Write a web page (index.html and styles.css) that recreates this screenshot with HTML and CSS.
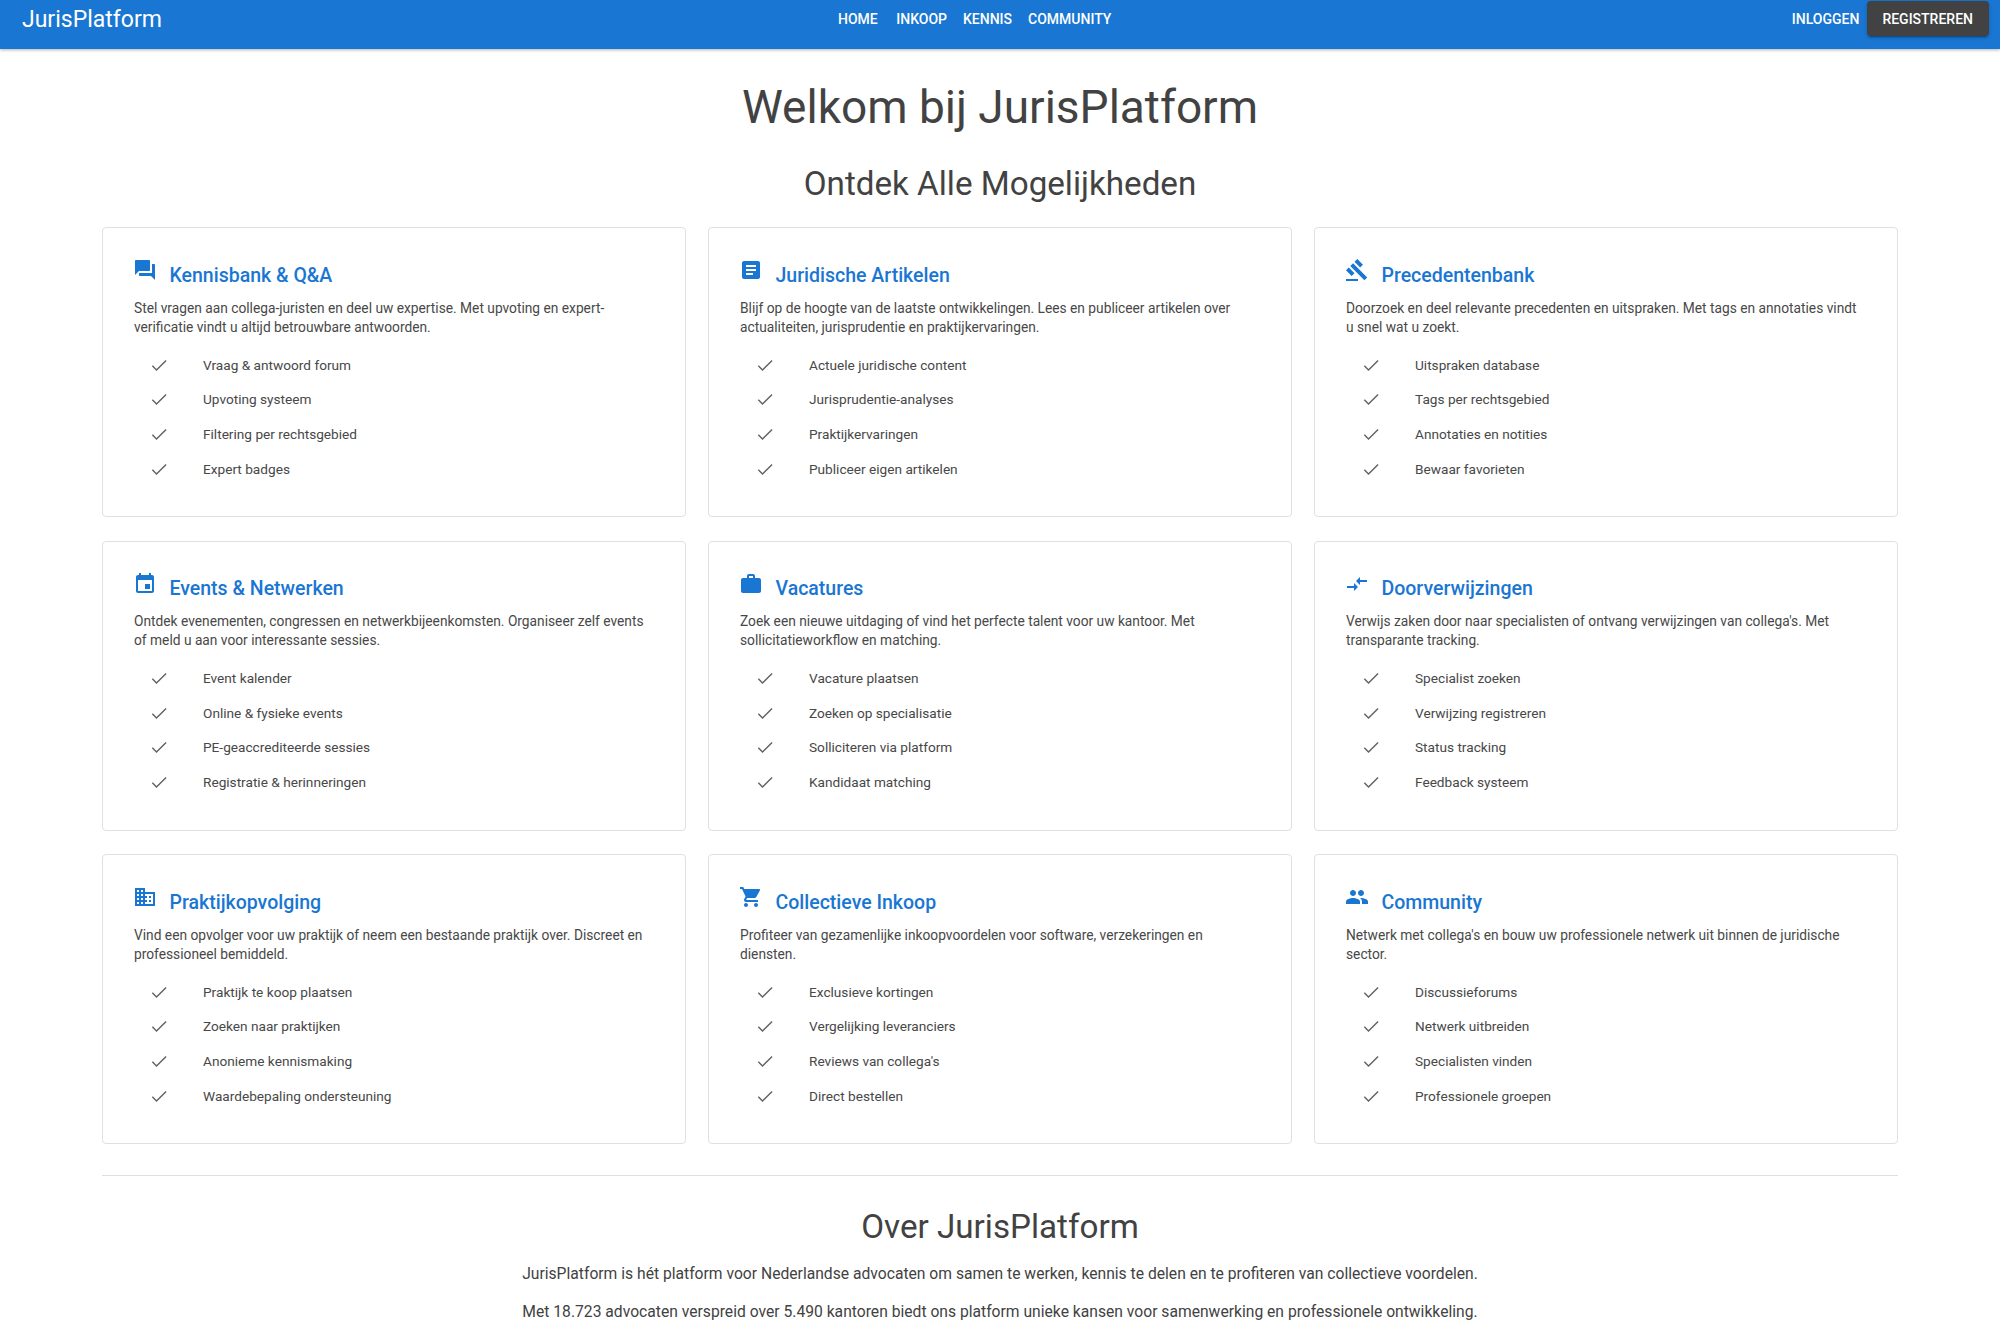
FILE: index.html
```html
<!DOCTYPE html>
<html lang="nl">
<head>
<meta charset="utf-8">
<title>JurisPlatform</title>
<link rel="stylesheet" href="styles.css">
</head>
<body>
<svg class="sprite" aria-hidden="true">
<symbol id="i-forum" viewBox="0 0 24 24"><path d="M21 6h-2v9H6v2c0 .55.45 1 1 1h11l4 4V7c0-.55-.45-1-1-1zm-4 6V3c0-.55-.45-1-1-1H3c-.55 0-1 .45-1 1v14l4-4h10c.55 0 1-.45 1-1z"/></symbol>
<symbol id="i-article" viewBox="0 0 24 24"><path d="M19 3H5c-1.1 0-2 .9-2 2v14c0 1.1.9 2 2 2h14c1.1 0 2-.9 2-2V5c0-1.1-.9-2-2-2zm-5 14H7v-2h7v2zm3-4H7v-2h10v2zm0-4H7V7h10v2z"/></symbol>
<symbol id="i-gavel" viewBox="0 0 24 24"><path d="M1 21h12v2H1v-2zM5.245 8.07l2.83-2.827 14.14 14.142-2.828 2.828L5.245 8.07zM12.317 1l5.657 5.656-2.83 2.83-5.654-5.66L12.317 1zM3.825 9.485l5.657 5.657-2.828 2.828-5.657-5.657 2.828-2.828z"/></symbol>
<symbol id="i-event" viewBox="0 0 24 24"><path d="M17 12h-5v5h5v-5zM16 1v2H8V1H6v2H5c-1.11 0-1.99.9-1.99 2L3 19c0 1.1.89 2 2 2h14c1.1 0 2-.9 2-2V5c0-1.1-.9-2-2-2h-1V1h-2zm3 18H5V8h14v11z"/></symbol>
<symbol id="i-work" viewBox="0 0 24 24"><path d="M20 6h-4V4c0-1.11-.89-2-2-2h-4c-1.11 0-2 .89-2 2v2H4c-1.11 0-1.99.89-1.99 2L2 19c0 1.11.89 2 2 2h16c1.11 0 2-.89 2-2V8c0-1.11-.89-2-2-2zm-6 0h-4V4h4v2z"/></symbol>
<symbol id="i-compare" viewBox="0 0 24 24"><path d="M9.01 14H2v2h7.01v3L13 15l-3.99-4v3zm5.98-1v-3H22V8h-7.01V5L11 9l3.99 4z"/></symbol>
<symbol id="i-business" viewBox="0 0 24 24"><path d="M12 7V3H2v18h20V7H12zM6 19H4v-2h2v2zm0-4H4v-2h2v2zm0-4H4V9h2v2zm0-4H4V5h2v2zm4 12H8v-2h2v2zm0-4H8v-2h2v2zm0-4H8V9h2v2zm0-4H8V5h2v2zm10 12h-8v-2h2v-2h-2v-2h2v-2h-2V9h8v10zm-2-8h-2v2h2v-2zm0 4h-2v2h2v-2z"/></symbol>
<symbol id="i-cart" viewBox="0 0 24 24"><path d="M7 18c-1.1 0-1.99.9-1.99 2S5.9 22 7 22s2-.9 2-2-.9-2-2-2zM1 2v2h2l3.6 7.59-1.35 2.45c-.16.28-.25.61-.25.96 0 1.1.9 2 2 2h12v-2H7.42c-.14 0-.25-.11-.25-.25l.03-.12.9-1.63h7.45c.75 0 1.41-.41 1.75-1.03l3.58-6.49c.08-.14.12-.31.12-.48 0-.55-.45-1-1-1H5.21l-.94-2H1zm16 16c-1.1 0-1.99.9-1.99 2s.89 2 1.99 2 2-.9 2-2-.9-2-2-2z"/></symbol>
<symbol id="i-people" viewBox="0 0 24 24"><path d="M16 11c1.66 0 2.99-1.34 2.99-3S17.66 5 16 5c-1.66 0-3 1.34-3 3s1.34 3 3 3zm-8 0c1.66 0 2.99-1.34 2.99-3S9.66 5 8 5C6.34 5 5 6.34 5 8s1.34 3 3 3zm0 2c-2.33 0-7 1.17-7 3.5V19h14v-2.5c0-2.33-4.67-3.5-7-3.5zm8 0c-.29 0-.62.02-.97.05 1.16.84 1.97 1.97 1.97 3.45V19h6v-2.5c0-2.33-4.67-3.5-7-3.5z"/></symbol>
<symbol id="i-check" viewBox="0 0 24 24"><path d="M4 13l5 5L20.5 6.5"/></symbol>
</svg>

<header class="appbar">
  <a class="brand">JurisPlatform</a>
  <nav class="nav">
    <a class="nav-link nav-link-first">Home</a>
    <a class="nav-link">Inkoop</a>
    <a class="nav-link">Kennis</a>
    <a class="nav-link">Community</a>
  </nav>
  <div class="auth">
    <a class="nav-link">Inloggen</a>
    <a class="btn-dark">Registreren</a>
  </div>
</header>

<main class="page">
  <h1 class="hero-title">Welkom bij JurisPlatform</h1>
  <h2 class="section-title">Ontdek Alle Mogelijkheden</h2>

  <section class="grid">
    <article class="card">
      <h3 class="card-head"><svg class="card-icon"><use href="#i-forum"/></svg><span class="card-title">Kennisbank &amp; Q&amp;A</span></h3>
      <p class="card-text">Stel vragen aan collega-juristen en deel uw expertise. Met upvoting en expert-verificatie vindt u altijd betrouwbare antwoorden.</p>
      <ul class="list">
        <li class="item"><svg class="check"><use href="#i-check"/></svg>Vraag &amp; antwoord forum</li>
        <li class="item"><svg class="check"><use href="#i-check"/></svg>Upvoting systeem</li>
        <li class="item"><svg class="check"><use href="#i-check"/></svg>Filtering per rechtsgebied</li>
        <li class="item"><svg class="check"><use href="#i-check"/></svg>Expert badges</li>
      </ul>
    </article>
    <article class="card">
      <h3 class="card-head"><svg class="card-icon"><use href="#i-article"/></svg><span class="card-title">Juridische Artikelen</span></h3>
      <p class="card-text">Blijf op de hoogte van de laatste ontwikkelingen. Lees en publiceer artikelen over actualiteiten, jurisprudentie en praktijkervaringen.</p>
      <ul class="list">
        <li class="item"><svg class="check"><use href="#i-check"/></svg>Actuele juridische content</li>
        <li class="item"><svg class="check"><use href="#i-check"/></svg>Jurisprudentie-analyses</li>
        <li class="item"><svg class="check"><use href="#i-check"/></svg>Praktijkervaringen</li>
        <li class="item"><svg class="check"><use href="#i-check"/></svg>Publiceer eigen artikelen</li>
      </ul>
    </article>
    <article class="card">
      <h3 class="card-head"><svg class="card-icon"><use href="#i-gavel"/></svg><span class="card-title">Precedentenbank</span></h3>
      <p class="card-text">Doorzoek en deel relevante precedenten en uitspraken. Met tags en annotaties vindt u snel wat u zoekt.</p>
      <ul class="list">
        <li class="item"><svg class="check"><use href="#i-check"/></svg>Uitspraken database</li>
        <li class="item"><svg class="check"><use href="#i-check"/></svg>Tags per rechtsgebied</li>
        <li class="item"><svg class="check"><use href="#i-check"/></svg>Annotaties en notities</li>
        <li class="item"><svg class="check"><use href="#i-check"/></svg>Bewaar favorieten</li>
      </ul>
    </article>
    <article class="card">
      <h3 class="card-head"><svg class="card-icon"><use href="#i-event"/></svg><span class="card-title">Events &amp; Netwerken</span></h3>
      <p class="card-text">Ontdek evenementen, congressen en netwerkbijeenkomsten. Organiseer zelf events of meld u aan voor interessante sessies.</p>
      <ul class="list">
        <li class="item"><svg class="check"><use href="#i-check"/></svg>Event kalender</li>
        <li class="item"><svg class="check"><use href="#i-check"/></svg>Online &amp; fysieke events</li>
        <li class="item"><svg class="check"><use href="#i-check"/></svg>PE-geaccrediteerde sessies</li>
        <li class="item"><svg class="check"><use href="#i-check"/></svg>Registratie &amp; herinneringen</li>
      </ul>
    </article>
    <article class="card">
      <h3 class="card-head"><svg class="card-icon"><use href="#i-work"/></svg><span class="card-title">Vacatures</span></h3>
      <p class="card-text">Zoek een nieuwe uitdaging of vind het perfecte talent voor uw kantoor. Met sollicitatieworkflow en matching.</p>
      <ul class="list">
        <li class="item"><svg class="check"><use href="#i-check"/></svg>Vacature plaatsen</li>
        <li class="item"><svg class="check"><use href="#i-check"/></svg>Zoeken op specialisatie</li>
        <li class="item"><svg class="check"><use href="#i-check"/></svg>Solliciteren via platform</li>
        <li class="item"><svg class="check"><use href="#i-check"/></svg>Kandidaat matching</li>
      </ul>
    </article>
    <article class="card">
      <h3 class="card-head"><svg class="card-icon"><use href="#i-compare"/></svg><span class="card-title">Doorverwijzingen</span></h3>
      <p class="card-text">Verwijs zaken door naar specialisten of ontvang verwijzingen van collega's. Met transparante tracking.</p>
      <ul class="list">
        <li class="item"><svg class="check"><use href="#i-check"/></svg>Specialist zoeken</li>
        <li class="item"><svg class="check"><use href="#i-check"/></svg>Verwijzing registreren</li>
        <li class="item"><svg class="check"><use href="#i-check"/></svg>Status tracking</li>
        <li class="item"><svg class="check"><use href="#i-check"/></svg>Feedback systeem</li>
      </ul>
    </article>
    <article class="card">
      <h3 class="card-head"><svg class="card-icon"><use href="#i-business"/></svg><span class="card-title">Praktijkopvolging</span></h3>
      <p class="card-text">Vind een opvolger voor uw praktijk of neem een bestaande praktijk over. Discreet en professioneel bemiddeld.</p>
      <ul class="list">
        <li class="item"><svg class="check"><use href="#i-check"/></svg>Praktijk te koop plaatsen</li>
        <li class="item"><svg class="check"><use href="#i-check"/></svg>Zoeken naar praktijken</li>
        <li class="item"><svg class="check"><use href="#i-check"/></svg>Anonieme kennismaking</li>
        <li class="item"><svg class="check"><use href="#i-check"/></svg>Waardebepaling ondersteuning</li>
      </ul>
    </article>
    <article class="card">
      <h3 class="card-head"><svg class="card-icon"><use href="#i-cart"/></svg><span class="card-title">Collectieve Inkoop</span></h3>
      <p class="card-text">Profiteer van gezamenlijke inkoopvoordelen voor software, verzekeringen en diensten.</p>
      <ul class="list">
        <li class="item"><svg class="check"><use href="#i-check"/></svg>Exclusieve kortingen</li>
        <li class="item"><svg class="check"><use href="#i-check"/></svg>Vergelijking leveranciers</li>
        <li class="item"><svg class="check"><use href="#i-check"/></svg>Reviews van collega's</li>
        <li class="item"><svg class="check"><use href="#i-check"/></svg>Direct bestellen</li>
      </ul>
    </article>
    <article class="card">
      <h3 class="card-head"><svg class="card-icon"><use href="#i-people"/></svg><span class="card-title">Community</span></h3>
      <p class="card-text">Netwerk met collega's en bouw uw professionele netwerk uit binnen de juridische sector.</p>
      <ul class="list">
        <li class="item"><svg class="check"><use href="#i-check"/></svg>Discussieforums</li>
        <li class="item"><svg class="check"><use href="#i-check"/></svg>Netwerk uitbreiden</li>
        <li class="item"><svg class="check"><use href="#i-check"/></svg>Specialisten vinden</li>
        <li class="item"><svg class="check"><use href="#i-check"/></svg>Professionele groepen</li>
      </ul>
    </article>
  </section>

  <hr class="divider">

  <section class="about">
    <h2 class="about-title">Over JurisPlatform</h2>
    <p class="about-text">JurisPlatform is hét platform voor Nederlandse advocaten om samen te werken, kennis te delen en te profiteren van collectieve voordelen.</p>
    <p class="about-text">Met 18.723 advocaten verspreid over 5.490 kantoren biedt ons platform unieke kansen voor samenwerking en professionele ontwikkeling.</p>
  </section>
</main>
</body>
</html>
```
FILE: styles.css
```css
* { box-sizing: border-box; }
html, body { margin: 0; padding: 0; }
body {
  font-family: Roboto, "Liberation Sans", sans-serif;
  color: #424242;
  background: #fff;
}
.sprite { display: none; }

.appbar {
  position: relative;
  height: 49px;
  background: #1976d2;
  color: #fff;
  padding: 0 11px 0 22px;
  display: flex;
  align-items: flex-start;
  justify-content: space-between;
  box-shadow: 0 1px 3px rgba(0,0,0,.3);
}
.brand { font-size: 23px; line-height: 39px; font-weight: 400; }
.nav {
  position: absolute;
  left: 830px;
  top: 1px;
  display: flex;
  gap: 0;
}
.nav-link {
  font-size: 14px;
  font-weight: 500;
  line-height: 36px;
  text-transform: uppercase;
  padding: 0 8px;
  display: block;
}
.nav-link-first { margin-right: 2.5px; }
.auth { display: flex; align-items: flex-start; padding-top: 1px; }
.btn-dark {
  height: 35px;
  font-size: 14px;
  font-weight: 500;
  line-height: 36px;
  text-transform: uppercase;
  padding: 0 16px 0 15px;
  background: #424242;
  border-radius: 4px;
  box-shadow: 0 3px 1px -2px rgba(0,0,0,.2), 0 2px 2px rgba(0,0,0,.14), 0 1px 5px rgba(0,0,0,.12);
}

.page { padding: 0 102px; }
.hero-title {
  margin: 0;
  padding-top: 30px;
  font-size: 46px;
  line-height: 56px;
  font-weight: 400;
  text-align: center;
}
.section-title {
  margin: 28px 0 0;
  font-size: 33.2px;
  line-height: 42px;
  font-weight: 400;
  text-align: center;
}
.grid {
  margin-top: 22px;
  display: grid;
  grid-template-columns: repeat(3, 584px);
  column-gap: 22px;
  row-gap: 23.5px;
}
.card {
  height: 290px;
  border: 1px solid #e0e0e0;
  border-radius: 4px;
  padding: 30px 31px 0;
}
.card-head {
  margin: 0;
  display: flex;
  align-items: flex-start;
  color: #1976d2;
  font-size: 19.5px;
  line-height: 24px;
  font-weight: 500;
}
.card-icon { width: 24px; height: 24px; fill: #1976d2; margin: 0 12.5px 0 -1px; flex: none; }
.card-title { padding-top: 5.5px; display: block; }
.card-text {
  margin: 11px 0 0;
  font-size: 13.75px;
  line-height: 19px;
  color: #484848;
}
.list { list-style: none; margin: 11px 0 0; padding: 0; }
.item {
  height: 34.6px;
  display: flex;
  align-items: center;
  font-size: 13.65px;
  padding-left: 15px;
  color: #484848;
}
.check { width: 20px; height: 20px; fill: none; stroke: #616161; stroke-width: 1.7px; margin-right: 34px; flex: none; }

.divider { border: 0; border-top: 1px solid #e0e0e0; margin: 31px 0 0; }
.about { text-align: center; }
.about-title {
  margin: 31px 0 0;
  font-size: 33.2px;
  line-height: 40px;
  font-weight: 400;
}
.about-text {
  margin: 16px 0 0;
  font-size: 15.67px;
  line-height: 22px;
}
```
